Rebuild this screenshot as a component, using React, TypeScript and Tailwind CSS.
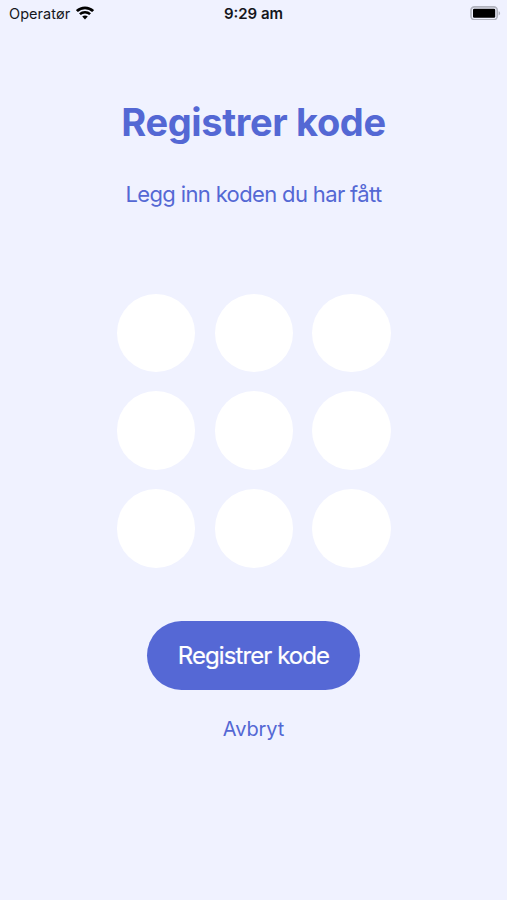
const CELLS = Array.from({ length: 9 }, (_, i) => i)

function WifiIcon({ className }: { className?: string }) {
  return (
    <svg viewBox="0 0 18 14" className={className} fill="none" stroke="currentColor">
      <path d="M0.9 5.1C5.4 0.7 12.6 0.7 17.1 5.1" strokeWidth="2.8" />
      <path d="M3.9 8.2C6.7 5.5 11.3 5.5 14.1 8.2" strokeWidth="2.5" />
      <path d="M9 13.4L6.2 10.6C7.8 9.2 10.2 9.2 11.8 10.6Z" fill="currentColor" stroke="none" />
    </svg>
  )
}

function BatteryIcon({ className }: { className?: string }) {
  return (
    <svg viewBox="0 0 31 14" className={className} fill="none">
      <rect x="1" y="0.9" width="26.2" height="12.8" rx="3.4" stroke="#b0b2bd" strokeWidth="1.6" />
      <rect x="3" y="2.8" width="22.2" height="9" rx="1.2" fill="#000" />
      <path d="M28.6 5.2C30.6 5.8 30.6 8.8 28.6 9.4Z" fill="#b0b2bd" />
    </svg>
  )
}

function StatusBar() {
  return (
    <header className="grid h-7 grid-cols-3 items-center pl-[9px] pr-[6px] text-[15px] text-[#15161c]">
      <div className="flex items-center gap-[6px]">
        <span className="text-[14.5px] tracking-[0.05px]">Operatør</span>
        <WifiIcon className="h-[14px] w-[18px] -translate-y-px text-black" />
      </div>
      <span className="-ml-[3px] text-center font-semibold">9:29 am</span>
      <BatteryIcon className="h-[14px] w-[31px] -translate-y-px justify-self-end" />
    </header>
  )
}

export default function App() {
  return (
    <div className="flex h-[900px] w-[507px] flex-col overflow-hidden bg-[#f0f2ff] font-['Inter',sans-serif] text-[#5468d4]">
      <StatusBar />

      <main className="flex flex-col items-center">
        <h1 className="mt-[70px] whitespace-nowrap text-[38px] font-bold leading-[48px] tracking-[-0.35px]">
          Registrer kode
        </h1>
        <p className="mt-[32px] whitespace-nowrap text-[22px] leading-[32px] tracking-[-0.64px]">
          Legg inn koden du har fått
        </p>

        {/* Code cells */}
        <div className="mt-[83.6px] ml-[0.6px] grid grid-cols-3 gap-[19.2px]">
          {CELLS.map((cell) => (
            <div key={cell} className="size-[78.6px] rounded-full bg-white" />
          ))}
        </div>

        <button className="mt-[53.6px] h-[68.4px] w-[213.6px] whitespace-nowrap rounded-full bg-[#5568d5] text-[24px] tracking-[-0.92px] text-white [-webkit-text-stroke:0.2px_white]">
          Registrer kode
        </button>
        <button className="mt-[23px] text-[20px] leading-[32px] tracking-[-0.1px]">Avbryt</button>
      </main>
    </div>
  )
}
